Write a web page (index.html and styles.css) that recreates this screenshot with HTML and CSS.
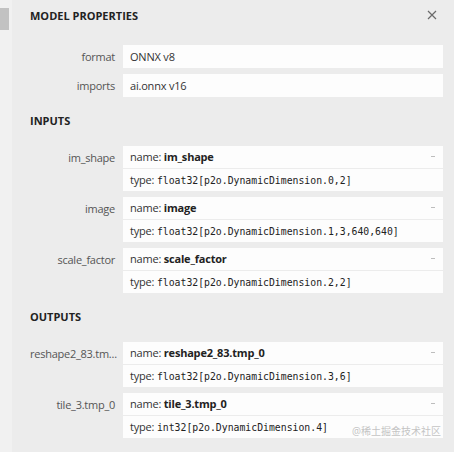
FILE: index.html
```html
<!DOCTYPE html>
<html>
<head>
<meta charset="utf-8">
<link rel="stylesheet" href="styles.css">
</head>
<body>
<div class="frame">
  <div class="rail"><div class="thumb"></div></div>
  <div class="panel">
    <div class="title-row">
      <div class="title">MODEL PROPERTIES</div>
      <svg class="close" width="10" height="10" viewBox="0 0 10 10"><path d="M1 1L9 9M9 1L1 9" stroke="#6a6a6a" stroke-width="1.2" fill="none"/></svg>
    </div>
    <div class="grid">
      <div class="label">format</div>
      <div class="box"><div class="row">ONNX v8</div></div>
      <div class="label">imports</div>
      <div class="box"><div class="row">ai.onnx v16</div></div>
    </div>
    <div class="section">INPUTS</div>
    <div class="grid">
      <div class="label">im_shape</div>
      <div class="box arg">
        <div class="row">name: <b>im_shape</b><span class="dash"></span></div>
        <div class="row">type: <code>float32[p2o.DynamicDimension.0,2]</code></div>
      </div>
      <div class="label">image</div>
      <div class="box arg">
        <div class="row">name: <b>image</b><span class="dash"></span></div>
        <div class="row">type: <code>float32[p2o.DynamicDimension.1,3,640,640]</code></div>
      </div>
      <div class="label">scale_factor</div>
      <div class="box arg">
        <div class="row">name: <b>scale_factor</b><span class="dash"></span></div>
        <div class="row">type: <code>float32[p2o.DynamicDimension.2,2]</code></div>
      </div>
    </div>
    <div class="section">OUTPUTS</div>
    <div class="grid">
      <div class="label">reshape2_83.tm...</div>
      <div class="box arg">
        <div class="row">name: <b>reshape2_83.tmp_0</b><span class="dash"></span></div>
        <div class="row">type: <code>float32[p2o.DynamicDimension.3,6]</code></div>
      </div>
      <div class="label">tile_3.tmp_0</div>
      <div class="box arg">
        <div class="row">name: <b>tile_3.tmp_0</b><span class="dash"></span></div>
        <div class="row">type: <code>int32[p2o.DynamicDimension.4]</code></div>
      </div>
    </div>
  </div>
  <div class="watermark">@稀土掘金技术社区</div>
</div>
</body>
</html>
```
FILE: styles.css
```css
html, body {
  margin: 0;
  padding: 0;
  background: #ececec;
}
body {
  font-family: "Open Sans", "Noto Sans CJK SC", sans-serif;
  font-size: 11px;
  color: #333;
}
.frame {
  position: relative;
  display: flex;
  width: 454px;
  height: 452px;
  overflow: hidden;
}
.rail {
  width: 12px;
  flex: none;
  background: #f1f1f1;
  padding-top: 8px;
  box-sizing: border-box;
}
.thumb {
  width: 9px;
  height: 22px;
  background: #c2c2c2;
}
.panel {
  flex: 1;
  background: #ececec;
  padding: 3px 11px 0 18px;
}
.title-row {
  display: flex;
  align-items: center;
  justify-content: space-between;
  height: 24px;
  margin-bottom: 18px;
}
.title {
  font-weight: 700;
  font-size: 11px;
  color: #222;
}
.close {
  margin-right: 6px;
}
.grid {
  display: grid;
  grid-template-columns: 85px 1fr;
  column-gap: 8px;
  row-gap: 6px;
}
.label {
  text-align: right;
  line-height: 23px;
  color: #555;
  white-space: nowrap;
  letter-spacing: -0.25px;
}
.box {
  display: flex;
  flex-direction: column;
  gap: 1px;
}
.row {
  position: relative;
  background: #fdfdfd;
  height: 23px;
  line-height: 23px;
  padding-left: 7px;
  color: #333;
  white-space: nowrap;
  letter-spacing: -0.2px;
}
.arg .row {
  height: 22px;
  line-height: 22px;
}
b {
  font-weight: 700;
  color: #222;
}
code {
  font-family: "DejaVu Sans Mono", monospace;
  font-size: 9.8px;
  letter-spacing: 0;
  color: #222;
}
.dash {
  position: absolute;
  right: 8px;
  top: 10px;
  width: 4px;
  height: 1px;
  background: #bdbdbd;
}
.section {
  font-weight: 700;
  color: #222;
  height: 24px;
  line-height: 24px;
  margin: 12px 0 13px;
}
.watermark {
  position: absolute;
  right: 13px;
  bottom: 14px;
  font-size: 10px;
  color: #c4c4c4;
  text-shadow: 0 0 2px #fff;
}
```
